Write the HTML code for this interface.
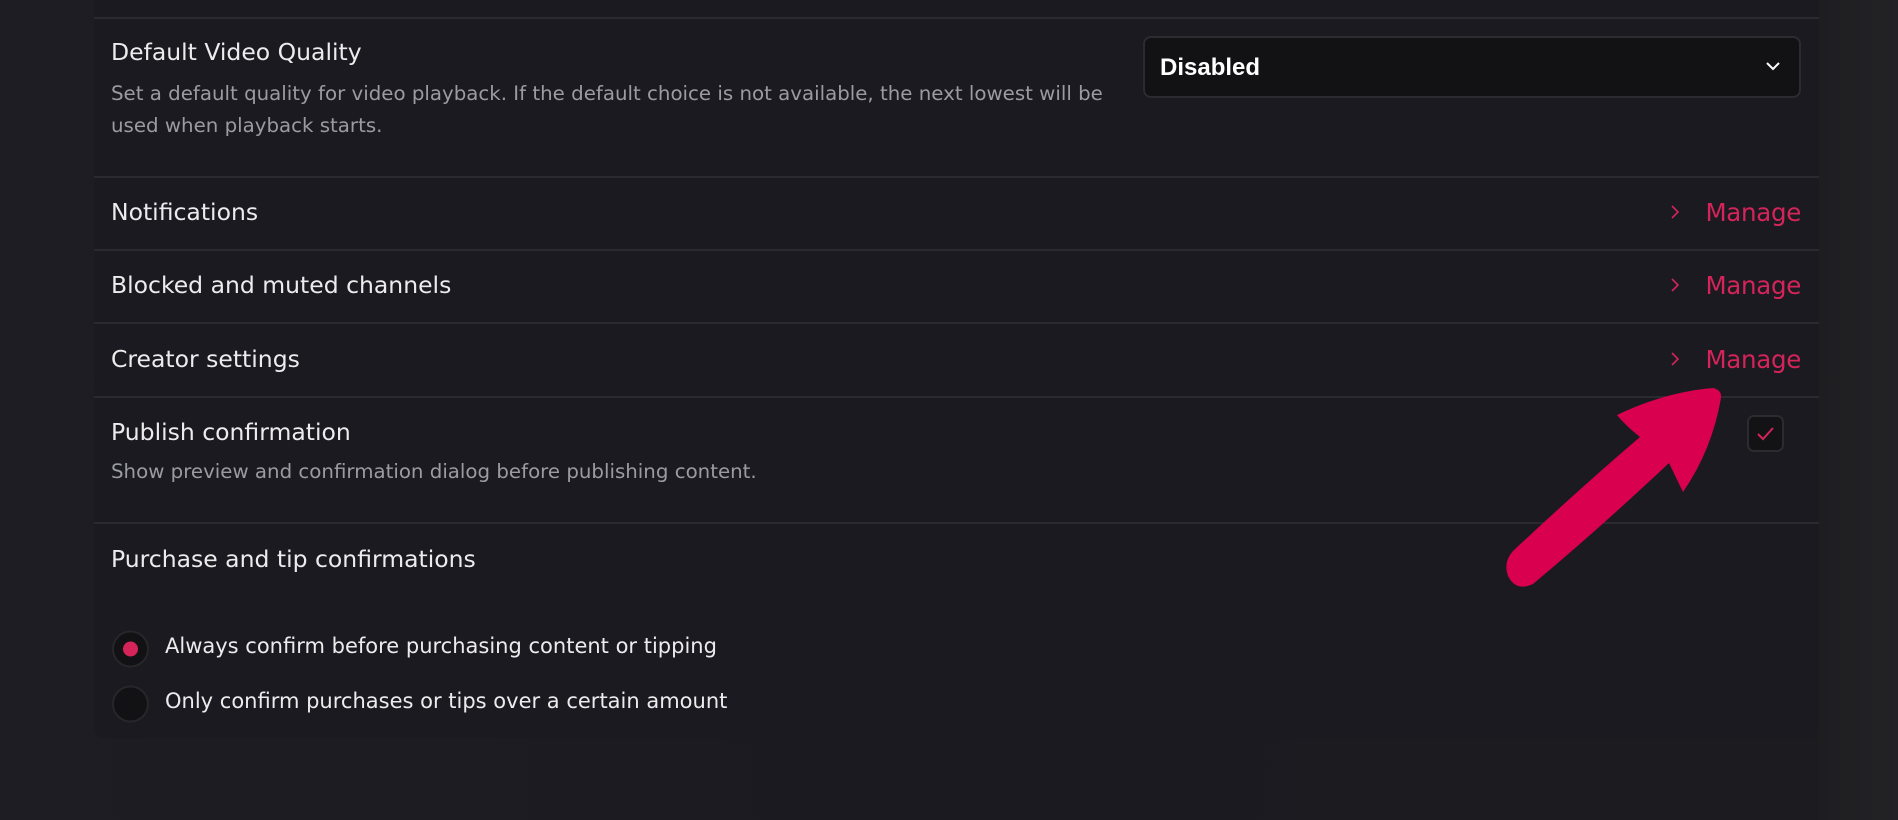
<!DOCTYPE html>
<html><head><meta charset="utf-8"><style>
*{margin:0;padding:0;box-sizing:border-box}
body{width:1898px;height:820px;overflow:hidden;background:linear-gradient(90deg,#1d1d23 0%,#1b1a21 50%,#1c1c20 100%);font-family:"DejaVu Sans","Liberation Sans",sans-serif;position:relative}
.outer{position:absolute;left:1819px;top:0;width:79px;height:820px;background:linear-gradient(90deg,#1e1e21,#232326)}
.card{position:absolute;left:94px;top:0;width:1725px;height:738px;background:#1b1a20;border-radius:0 0 8px 8px}
.line{position:absolute;left:94px;width:1725px;height:2px;background:#2a2a30}
.t{position:absolute;left:111px;color:#ececee;font-size:23.5px;line-height:26px;transform:translateY(-50%);white-space:nowrap}
.d{position:absolute;left:111px;color:#9b9ba2;font-size:19.8px;line-height:22px;transform:translateY(-50%);white-space:nowrap}
.m{position:absolute;right:97px;color:#d4245a;font-size:24.5px;line-height:26px;transform:translateY(-50%);letter-spacing:-0.3px}
.chev{position:absolute;left:1668px;width:14px;height:18px;transform:translateY(-50%)}
.dd{position:absolute;left:1143px;top:36px;width:658px;height:62px;background:#121214;border:2px solid #2b2b30;border-radius:8px}
.dd span{position:absolute;left:15px;top:16px;color:#fff;font-size:24px;font-weight:bold;font-family:"Liberation Sans",sans-serif}
.radio{position:absolute;left:112px;width:37px;height:37px;border-radius:50%;background:#121214;border:2px solid #26262b;transform:translateY(-50%)}
.radio i{position:absolute;left:9px;top:9px;width:15px;height:15px;border-radius:50%;background:#d4245a}
.rl{position:absolute;left:165px;color:#ececee;font-size:21px;transform:translateY(-50%);white-space:nowrap}
.cb{position:absolute;left:1747px;top:415px;width:37px;height:37px;border:2px solid #2b2b30;border-radius:7px;background:#131316}
</style></head><body>
<div class="outer"></div>
<div class="card"></div>
<div class="line" style="top:17px"></div>
<div class="line" style="top:176px"></div>
<div class="line" style="top:249px"></div>
<div class="line" style="top:322px"></div>
<div class="line" style="top:396px"></div>
<div class="line" style="top:522px"></div>

<div class="t" style="top:52px">Default Video Quality</div>
<div class="d" style="top:94px">Set a default quality for video playback. If the default choice is not available, the next lowest will be</div>
<div class="d" style="top:126px">used when playback starts.</div>
<div class="dd"><span>Disabled</span>
<svg style="position:absolute;right:18px;top:22px" width="16" height="12" viewBox="0 0 16 12"><path d="M2 3l6 6 6-6" stroke="#fff" stroke-width="2" fill="none"/></svg></div>

<div class="t" style="top:212px">Notifications</div>
<div class="t" style="top:285px">Blocked and muted channels</div>
<div class="t" style="top:359px">Creator settings</div>
<svg class="chev" style="top:212px" viewBox="0 0 14 18"><path d="M4 3l6 6-6 6" stroke="#d4245a" stroke-width="1.6" fill="none"/></svg>
<svg class="chev" style="top:285px" viewBox="0 0 14 18"><path d="M4 3l6 6-6 6" stroke="#d4245a" stroke-width="1.6" fill="none"/></svg>
<svg class="chev" style="top:359px" viewBox="0 0 14 18"><path d="M4 3l6 6-6 6" stroke="#d4245a" stroke-width="1.6" fill="none"/></svg>
<div class="m" style="top:213px">Manage</div>
<div class="m" style="top:286px">Manage</div>
<div class="m" style="top:360px">Manage</div>

<div class="t" style="top:432px">Publish confirmation</div>
<div class="d" style="top:472px">Show preview and confirmation dialog before publishing content.</div>
<div class="cb"><svg width="33" height="33" viewBox="0 0 33 33"><path d="M9 17l5 5 10-11" stroke="#d4245a" stroke-width="2" fill="none"/></svg></div>

<div class="t" style="top:559px">Purchase and tip confirmations</div>
<div class="radio" style="top:649px"><i></i></div>
<div class="rl" style="top:646px">Always confirm before purchasing content or tipping</div>
<div class="radio" style="top:704px"></div>
<div class="rl" style="top:701px">Only confirm purchases or tips over a certain amount</div>

<svg style="position:absolute;left:0;top:0" width="1898" height="820">
<path d="M1713 388 Q1722 390 1721 398 Q1712 450 1683 492 L1669 463 Q1600 528 1533 584 Q1516 592 1508 576 Q1503 562 1513 551 Q1578 490 1640 437 Q1625 425 1617 415 Q1665 392 1713 388 Z" fill="#d8004f"/>
</svg>
</body></html>
